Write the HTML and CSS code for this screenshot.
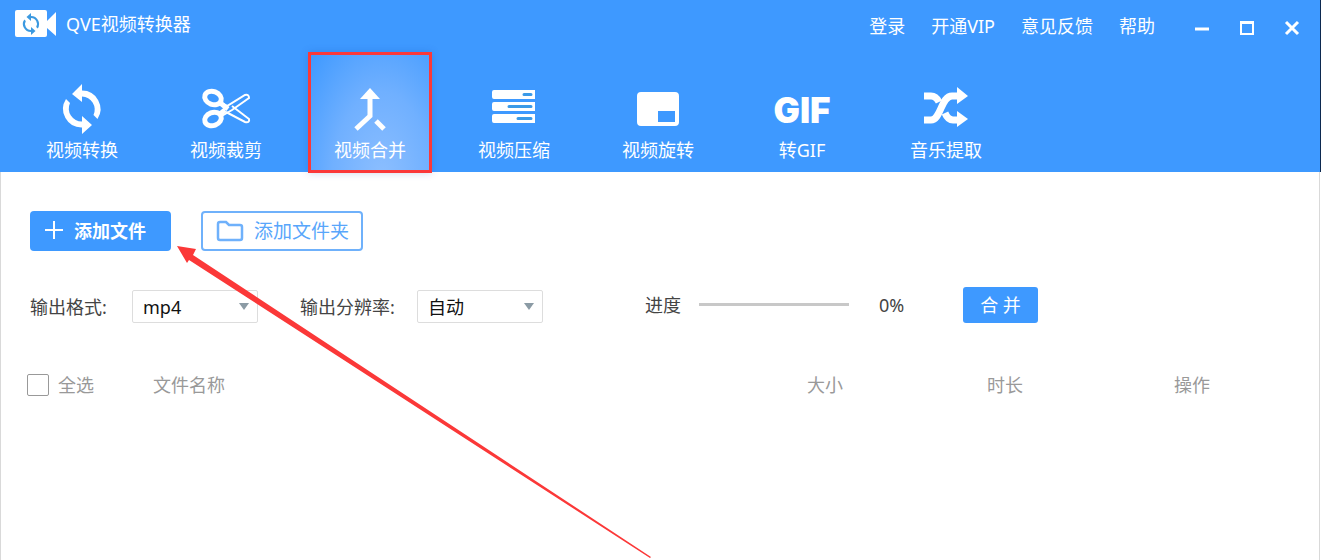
FILE: index.html
```html
<!DOCTYPE html>
<html lang="zh-CN">
<head>
  <meta charset="UTF-8" />
  <meta name="viewport" content="width=device-width, initial-scale=1.0"/>
  <title>QVE视频转换器</title>
  <link rel="stylesheet" href="styles.css">
</head>
<body>
  <header class="app-header">
    <div class="title-bar">
      <div class="brand">
        <svg width="42" height="28" viewBox="0 0 42 28">
          <rect x="0" y="0" width="32" height="27" rx="2" fill="#fff"/>
          <path d="M32 11 L41 2 V26 L32 18 Z" fill="#fff"/>
          <g transform="translate(4 2)" fill="#3b99e0">
            <path d="M12 4V1L7.5 5 12 9V6a6 6 0 0 1 5.200 9l1.500 1.500A8 8 0 0 0 12 4zM12 18a6 6 0 0 1-5.200-9L5.300 7.500A8 8 0 0 0 12 20v3l4.500-4-4.500-4z"/>
          </g>
        </svg>
        <span>QVE视频转换器</span>
      </div>
      <nav class="top-links">
        <a href="#">登录</a>
        <a href="#">开通VIP</a>
        <a href="#">意见反馈</a>
        <a href="#">帮助</a>
      </nav>
      <div class="window-buttons">
        <button type="button" aria-label="最小化">
          <svg width="16" height="16" viewBox="0 0 16 16"><path d="M1 9H15" stroke="#fff" stroke-width="3"/></svg>
        </button>
        <button type="button" aria-label="最大化">
          <svg width="16" height="16" viewBox="0 0 16 16"><path d="M2 2V14H14V2" fill="none" stroke="#fff" stroke-width="2"/><path d="M1 2.500H15" stroke="#fff" stroke-width="3"/></svg>
        </button>
        <button type="button" aria-label="关闭">
          <svg width="16" height="16" viewBox="0 0 16 16"><path d="M2 2L14 14M14 2L2 14" stroke="#fff" stroke-width="3"/></svg>
        </button>
      </div>
    </div>

    <!-- Main tools -->
    <nav class="tabs">
      <button type="button" class="tab">
        <svg width="50" height="50" viewBox="0 0 50 50" fill="#fff">
          <path d="M25 0 L15 10 L25 18 V12.500 A13 13 0 0 1 36.500 31 L40.500 35 A18.500 18.500 0 0 0 25 6.500 Z"/>
          <path d="M25 50 L35 41 L25 32 V37.500 A13 13 0 0 1 13 19 L9 15 A18.500 18.500 0 0 0 25 43.500 Z"/>
        </svg>
        <span>视频转换</span>
      </button>
      <button type="button" class="tab">
        <svg width="50" height="50" viewBox="0 0 50 50" fill="none" stroke="#fff">
          <ellipse cx="12" cy="14" rx="8.500" ry="6.500" transform="rotate(20 12 14)" stroke-width="5"/>
          <ellipse cx="12" cy="35" rx="8.500" ry="6.500" transform="rotate(-20 12 35)" stroke-width="5"/>
          <path d="M18 18 L26 22 L44 11 Q48 10 48 14 L31 26 L19 33" stroke-width="2"/>
          <path d="M18 30 L22 26 M31 22 L48 35 Q49 39 44 38 L25 28" stroke-width="2"/>
          <path d="M18 18 L27 25 M18 31 L24 26" stroke-width="5"/>
        </svg>
        <span>视频裁剪</span>
      </button>
      <button type="button" class="tab active">
        <svg width="50" height="50" viewBox="0 0 50 50" fill="none" stroke="#fff" stroke-width="5">
          <path d="M11 45 L25 32 V14 M31 37 L39 45"/>
          <path d="M25 4 L35 15 H15 Z" fill="#fff" stroke="none"/>
        </svg>
        <span>视频合并</span>
      </button>
      <button type="button" class="tab">
        <svg width="50" height="50" viewBox="0 0 50 50" fill="#fff">
          <path d="M5 6H46V15H5Q3 15 3 13V8Q3 6 5 6ZM5 18H46V27H5Q3 27 3 25V20Q3 18 5 18ZM5 30H46V39H5Q3 39 3 37V32Q3 30 5 30Z"/>
          <path d="M35 10.500H42M20 22.500H42M29 34.500H42" stroke="#3b9ae8" stroke-width="3" stroke-linecap="round"/>
        </svg>
        <span>视频压缩</span>
      </button>
      <button type="button" class="tab">
        <svg width="50" height="50" viewBox="0 0 50 50" fill="#fff">
          <path fill-rule="evenodd" d="M8 8H42Q46 8 46 12V38Q46 42 42 42H8Q4 42 4 38V12Q4 8 8 8ZM25 27V38H42V27Z"/>
        </svg>
        <span>视频旋转</span>
      </button>
      <button type="button" class="tab">
        <strong class="gif-mark">GIF</strong>
        <span>转GIF</span>
      </button>
      <button type="button" class="tab">
        <svg width="50" height="50" viewBox="0 0 50 50" fill="none" stroke="#fff" stroke-width="7">
          <path d="M3 36H10C20 36 20 12 31 12H38"/>
          <path d="M3 12H10Q15 12 18 18M24 29Q27 36 32 36H38"/>
          <path d="M36 3L47 12L36 20ZM36 27L47 35L36 43Z" fill="#fff" stroke="none"/>
        </svg>
        <span>音乐提取</span>
      </button>
    </nav>
  </header>

  <main class="content">
    <div class="file-actions">
      <button type="button" class="add-file">
        <svg width="20" height="20" viewBox="0 0 20 20"><path d="M1 9H19M10 0V18" stroke="#fff" stroke-width="2"/></svg>
        <span>添加文件</span>
      </button>
      <button type="button" class="add-folder">
        <svg width="28" height="22" viewBox="0 0 28 22"><path d="M4 2H10L13 5H24Q26 5 26 7V18Q26 20 24 20H4Q2 20 2 18V4Q2 2 4 2Z" fill="none" stroke="#6fb1fb" stroke-width="2.500"/></svg>
        <span>添加文件夹</span>
      </button>
    </div>

    <div class="options">
      <div class="field">
        <label for="format">输出格式:</label>
        <select id="format">
          <option>mp4</option>
        </select>
      </div>
      <div class="field">
        <label for="resolution">输出分辨率:</label>
        <select id="resolution">
          <option>自动</option>
        </select>
      </div>
      <div class="progress">
        <label for="merge-progress">进度</label>
        <progress id="merge-progress" value="0" max="100"></progress>
        <span class="percent">0%</span>
        <button type="button" class="merge">合 并</button>
      </div>
    </div>

    <table class="file-table">
      <thead>
        <tr>
          <th class="col-check">
            <label class="check-all"><input type="checkbox">全选</label>
          </th>
          <th>文件名称</th>
          <th class="col-size">大小</th>
          <th class="col-time">时长</th>
          <th class="col-action">操作</th>
        </tr>
      </thead>
    </table>
  </main>

  <!-- Pointer to the add file button -->
  <svg class="pointer" width="476" height="314" viewBox="0 0 476 314">
    <path d="M0 0L19 3L16 9L474 311L473 312L12 14L10 17Z" fill="#fb3838"/>
  </svg>
</body>
</html>
```
FILE: styles.css
```css
* {
  box-sizing: border-box;
}

body {
  margin: 0;
  min-height: 100vh;
  display: flex;
  flex-direction: column;
  position: relative;
  background: #fff;
  color: #444;
  font-family: "Noto Sans", "Noto Sans CJK SC", sans-serif;
  font-size: 18px;
  line-height: 24px;
}

button,
select {
  font: inherit;
}

button {
  padding: 0;
  border: none;
  cursor: pointer;
}

svg {
  display: block;
}

/* Header */
.app-header {
  height: 172px;
  background: #3e99ff;
  border-right: 1px solid #0c2950;
  color: #fff;
}

.title-bar {
  display: flex;
  height: 52px;
  padding: 0 6px 0 15px;
}

.brand {
  display: flex;
  align-items: center;
  gap: 9px;
  height: 48px;
  margin-right: auto;
}

.top-links {
  display: flex;
  align-items: center;
  gap: 26px;
  margin-right: 24px;
}

.top-links a {
  color: #fff;
  text-decoration: none;
}

.window-buttons {
  display: flex;
}

.window-buttons button {
  display: flex;
  align-items: center;
  justify-content: center;
  width: 45px;
  padding-top: 4px;
  background: none;
}

/* Tabs */
.tabs {
  display: flex;
  gap: 20px;
  padding-left: 20px;
}

.tab {
  display: flex;
  flex-direction: column;
  align-items: center;
  gap: 4px;
  width: 124px;
  height: 121px;
  padding-top: 32px;
  background: none;
  color: #fff;
}

.tab.active {
  padding-top: 29px;
  border: 3px solid #fb3838;
  background: radial-gradient(ellipse at 60% 110%, #8dbfff 0%, #70b0ff 50%, #3e99ff 100%);
  box-shadow: 0 0 8px rgba(0, 60, 160, 0.2);
}

.gif-mark {
  height: 50px;
  font-family: Inter, sans-serif;
  font-size: 35px;
  font-weight: 900;
  line-height: 52px;
}

/* Content */
.content {
  flex: 1;
  margin-right: 1px;
  padding: 39px 0 0 29px;
  border: solid #d9d9d9;
  border-width: 0 1px;
}

.file-actions {
  display: flex;
  gap: 30px;
}

.file-actions button {
  display: flex;
  align-items: center;
  height: 40px;
  border-radius: 4px;
}

.add-file {
  gap: 10px;
  width: 141px;
  padding-left: 14px;
  background: #3e99ff;
  color: #fff;
  font-weight: bold;
}

.file-actions .add-folder {
  gap: 10px;
  width: 162px;
  padding-left: 13px;
  border: 2px solid #6fb1fb;
  background: #fff;
  color: #58a6fb;
  font-size: 19px;
}

.options {
  display: flex;
  align-items: center;
  margin-top: 35px;
}

.field {
  display: flex;
  align-items: center;
  justify-content: space-between;
  width: 228px;
  margin-right: 42px;
  padding-top: 4px;
}

.field + .field {
  width: 243px;
  margin-right: 102px;
}

.field select {
  appearance: none;
  width: 126px;
  height: 33px;
  padding: 0 10px;
  border: 1px solid #ddd;
  border-radius: 2px;
  background: #fff url("data:image/svg+xml,%3Csvg xmlns='http://www.w3.org/2000/svg' width='10' height='7'%3E%3Cpath d='M0 0H10L5 7Z' fill='%238b9ba5'/%3E%3C/svg%3E") no-repeat right 8px center;
  color: #111;
}

.progress {
  display: flex;
  align-items: center;
}

.progress progress {
  appearance: none;
  width: 150px;
  height: 3px;
  margin: 0 30px 0 18px;
  border: none;
  background: #c8c8c8;
}

.progress progress::-webkit-progress-bar {
  background: #c8c8c8;
}

.percent {
  width: 84px;
}

.merge {
  width: 75px;
  height: 36px;
  border-radius: 3px;
  background: #3e99ff;
  color: #fff;
}

/* File list */
.file-table {
  width: 100%;
  margin-top: 50px;
  border-collapse: collapse;
  table-layout: fixed;
}

.file-table th {
  padding: 0;
  color: #999;
  font-weight: normal;
  text-align: left;
}

.file-table .col-check {
  width: 123px;
}

.col-size {
  width: 180px;
}

.col-time {
  width: 187px;
}

.col-action {
  width: 145px;
}

.check-all {
  display: flex;
  align-items: center;
  gap: 9px;
  margin-left: -3px;
}

.check-all input {
  appearance: none;
  width: 22px;
  height: 22px;
  margin: 0;
  border: 1px solid #999;
  border-radius: 2px;
}

.pointer {
  position: absolute;
  top: 246px;
  left: 177px;
  pointer-events: none;
}
```
